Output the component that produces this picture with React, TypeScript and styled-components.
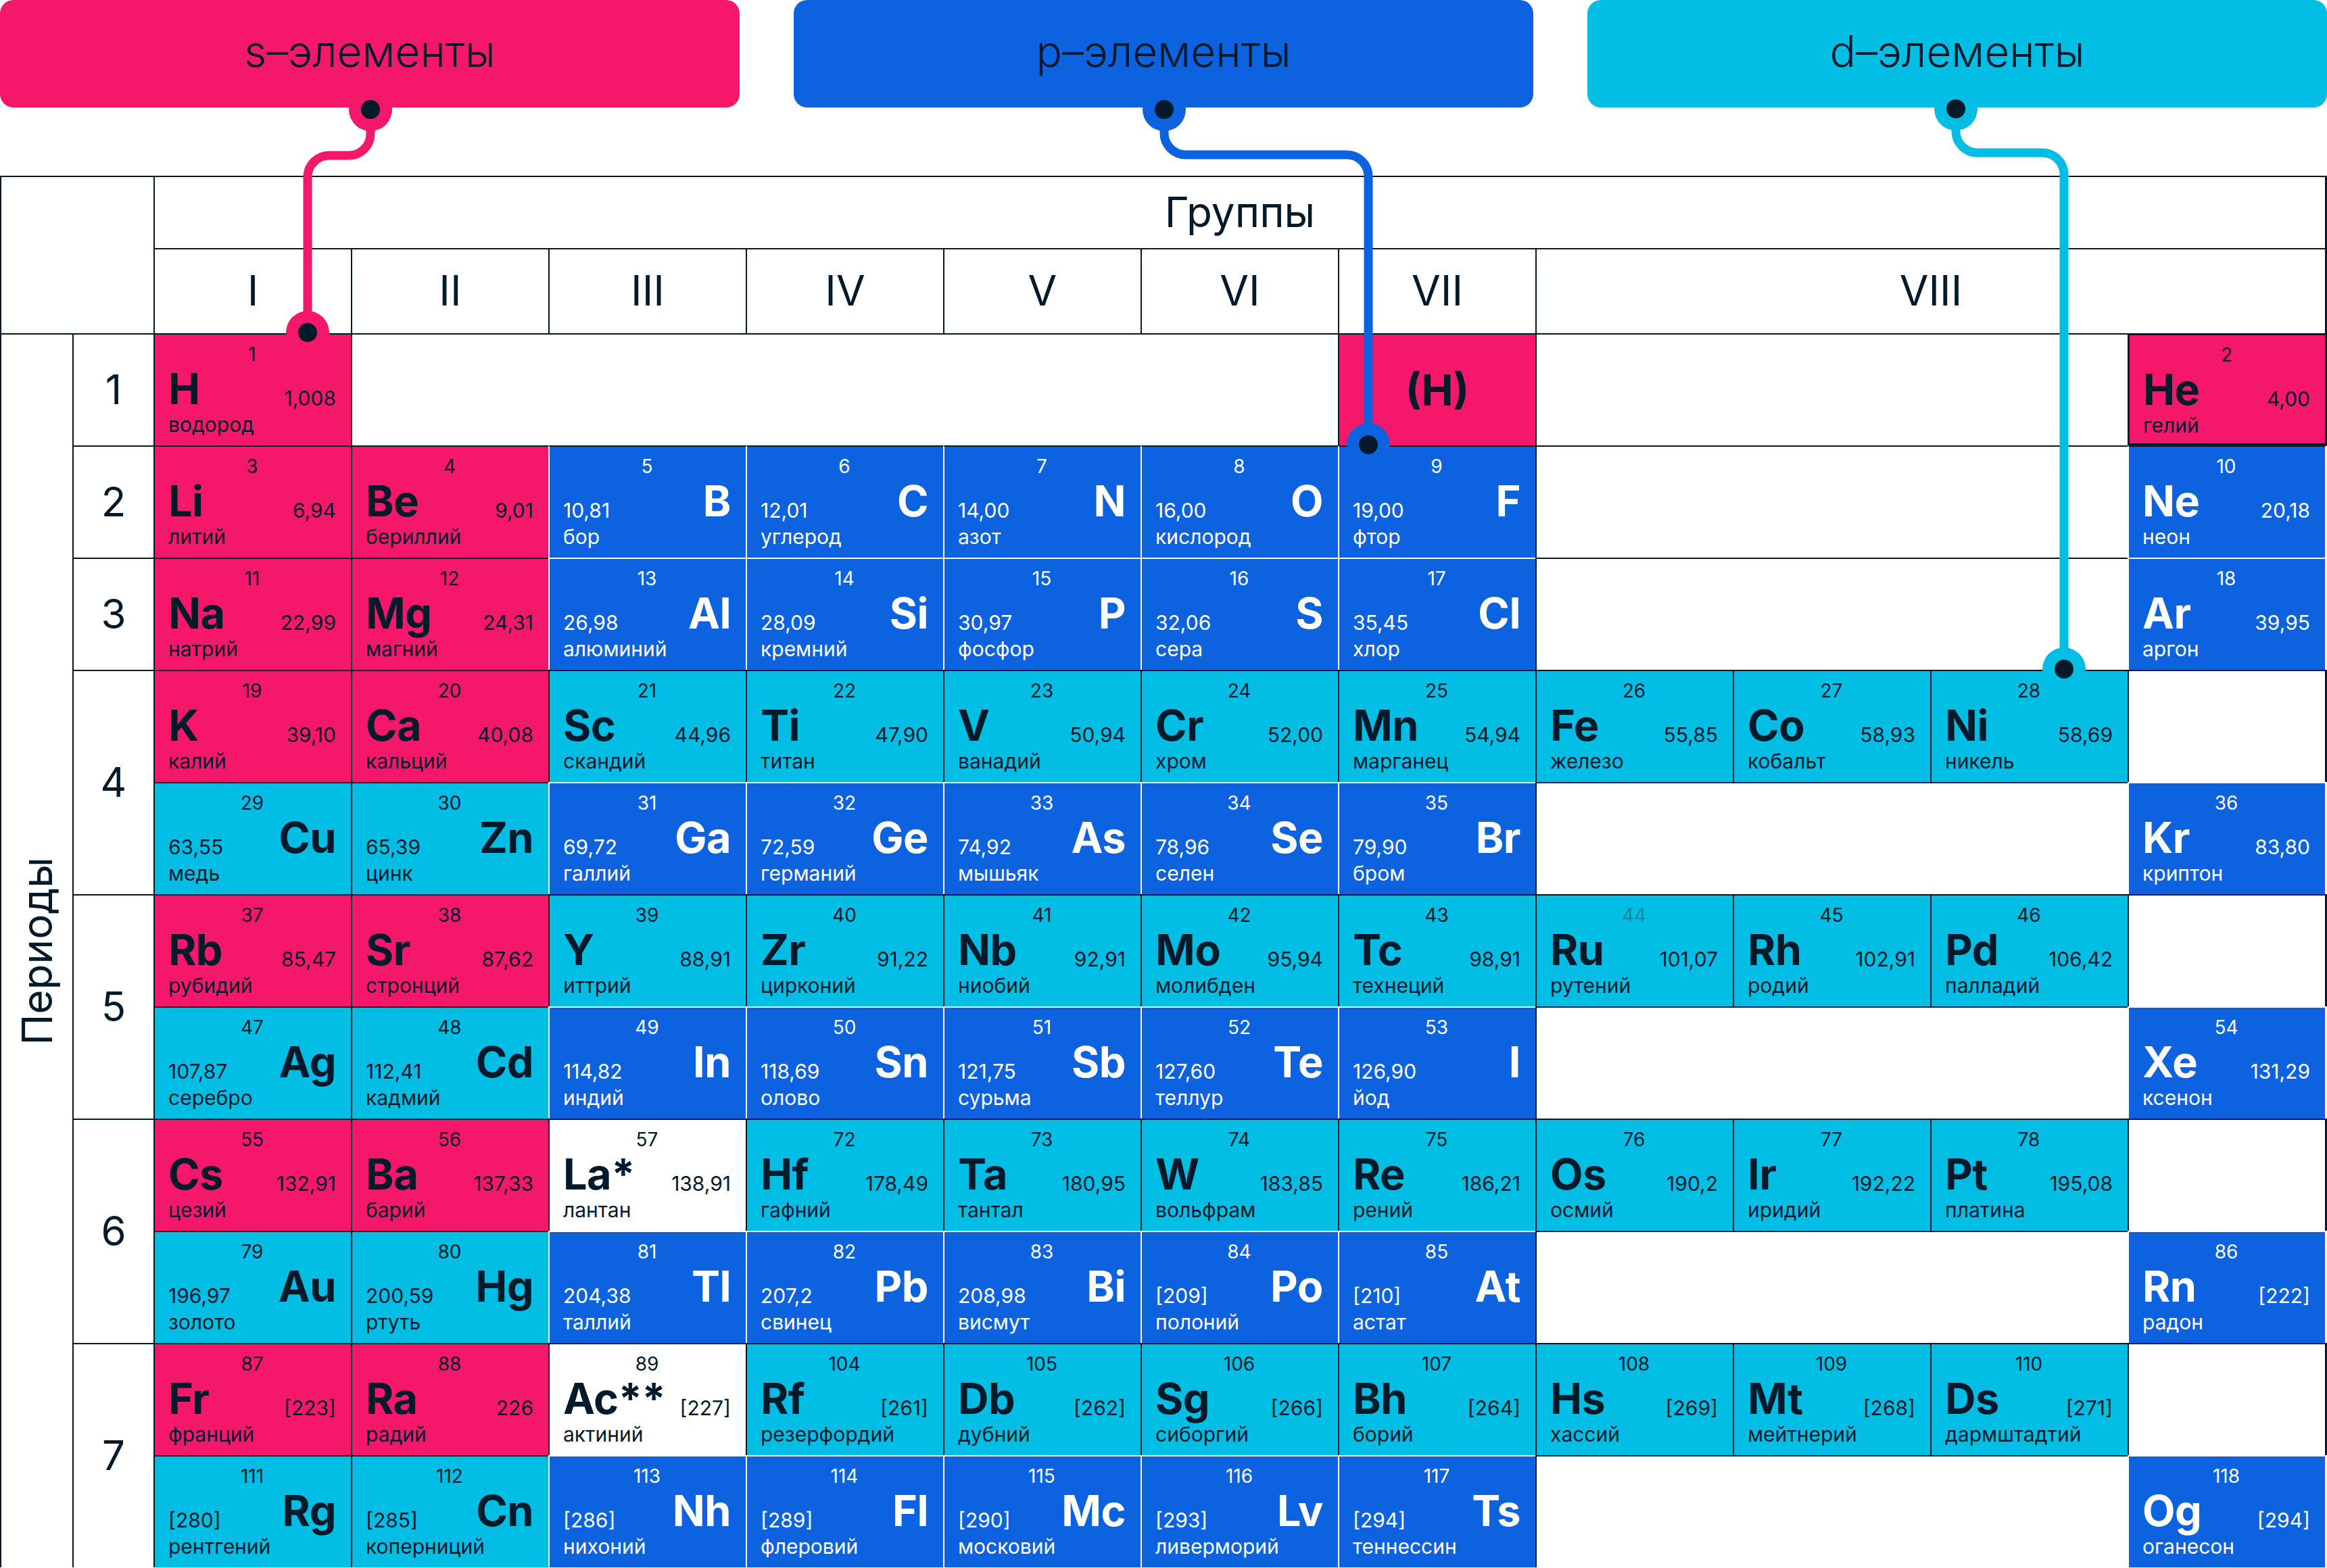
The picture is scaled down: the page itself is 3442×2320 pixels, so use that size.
import React from 'react';
import styled, { createGlobalStyle, css } from 'styled-components';

type Kind = 's' | 'p' | 'd' | 'f';

const palette = {
  ink: '#031a2b',
  s: '#f5186a',
  p: '#0d62df',
  d: '#03bee4',
  f: '#ffffff',
  white: '#ffffff',
};

const GlobalStyle = createGlobalStyle`
  * { box-sizing: border-box; }
  html, body { margin: 0; padding: 0; background: #ffffff; }
  body {
    font-family: Inter, "Noto Sans", "Liberation Sans", sans-serif;
    color: ${palette.ink};
  }
`;

const Page = styled.div`
  position: relative;
  width: 3442px;
  height: 2320px;
  overflow: hidden;
  background: #ffffff;
`;

const Legend = styled.div`
  display: grid;
  grid-template-columns: repeat(3, 1fr);
  column-gap: 80px;
  height: 159px;
  margin-bottom: 101px;
`;

const LegendBox = styled.div<{ $kind: Kind }>`
  display: flex;
  align-items: center;
  justify-content: center;
  padding-bottom: 8px;
  border-radius: 20px;
  background: ${(p) => palette[p.$kind]};
  font-size: 64px;
  font-weight: 300;
  color: ${palette.ink};
`;

const Table = styled.div`
  display: grid;
  grid-template-columns: 107px 120px repeat(10, 292px) 295px;
  grid-template-rows: 107px 126px repeat(11, 166px);
`;

const HeadCell = styled.div<{ $col: string; $row: string; $last?: boolean }>`
  grid-column: ${(p) => p.$col};
  grid-row: ${(p) => p.$row};
  display: flex;
  align-items: center;
  justify-content: center;
  padding-bottom: 3px;
  border-top: 2px solid ${palette.ink};
  border-left: 2px solid ${palette.ink};
  ${(p) => p.$last && css`border-right: 3px solid ${palette.ink};`}
  font-size: 62px;
  font-weight: 400;
`;

const PeriodsLabel = styled(HeadCell)`
  padding-bottom: 0;
  span {
    writing-mode: vertical-rl;
    transform: rotate(180deg);
  }
`;

const PeriodNumber = styled(HeadCell)`
  font-size: 60px;
`;

const Cell = styled.div<{
  $kind: Kind;
  $row: number;
  $topDark?: boolean;
  $last?: boolean;
  $outlined?: boolean;
}>`
  grid-row: ${(p) => p.$row};
  background: ${(p) => palette[p.$kind]};
  color: ${(p) => (p.$kind === 'p' ? palette.white : palette.ink)};
  border-top: 2px solid
    ${(p) => (p.$kind === 'p' && !p.$topDark ? palette.white : palette.ink)};
  border-left: 2px solid ${(p) => (p.$kind === 'p' ? palette.white : palette.ink)};
  ${(p) =>
    p.$last &&
    css`
      border-right: 3px solid ${p.$kind === 'p' ? palette.white : palette.ink};
    `}
  ${(p) =>
    p.$outlined &&
    css`
      border: 3px solid ${palette.ink};
    `}
  padding: 13px 22px 0 20px;
  display: grid;
  grid-template-rows: 32px 70px 36px;
  min-width: 0;
`;

const Number = styled.div<{ $muted?: boolean }>`
  text-align: center;
  font-size: 28px;
  line-height: 32px;
  ${(p) => p.$muted && css`color: #1b87a8;`}
`;

const MainRow = styled.div<{ $flip?: boolean }>`
  display: flex;
  flex-direction: ${(p) => (p.$flip ? 'row-reverse' : 'row')};
  justify-content: space-between;
  align-items: baseline;
`;

const Symbol = styled.span`
  font-size: 63px;
  font-weight: 700;
  line-height: 70px;
  letter-spacing: -0.5px;
`;

const Mass = styled.span`
  font-size: 30px;
  line-height: 70px;
  position: relative;
  top: 2px;
`;

const Name = styled.div`
  font-size: 30px;
  line-height: 36px;
  white-space: nowrap;
`;

const MirrorCell = styled(Cell)`
  display: flex;
  align-items: center;
  justify-content: center;
  padding: 0;
  font-size: 63px;
  font-weight: 700;
`;

const EmptyCell = styled.div<{ $row: number; $span: number; $last?: boolean }>`
  grid-row: ${(p) => p.$row};
  grid-column: span ${(p) => p.$span};
  border-top: 2px solid ${palette.ink};
  border-left: 2px solid ${palette.ink};
  ${(p) => p.$last && css`border-right: 3px solid ${palette.ink};`}
`;

const Overlay = styled.svg`
  position: absolute;
  left: 0;
  top: 0;
  pointer-events: none;
`;

type El = {
  n: number;
  sym: string;
  mass: string;
  name: string;
  kind: Kind;
  flip?: boolean;
  muted?: boolean;
  outlined?: boolean;
};
type Item = El | { empty: number } | { mirror: string };

const e = (
  n: number,
  sym: string,
  mass: string,
  name: string,
  kind: Kind,
  flip = false,
  extra: Partial<El> = {}
): El => ({ n, sym, mass, name, kind, flip, ...extra });

const rows: { period: number; items: Item[] }[] = [
  {
    period: 1,
    items: [
      e(1, 'H', '1,008', 'водород', 's'),
      { empty: 5 },
      { mirror: '(H)' },
      { empty: 3 },
      e(2, 'He', '4,00', 'гелий', 's', false, { outlined: true }),
    ],
  },
  {
    period: 2,
    items: [
      e(3, 'Li', '6,94', 'литий', 's'),
      e(4, 'Be', '9,01', 'бериллий', 's'),
      e(5, 'B', '10,81', 'бор', 'p', true),
      e(6, 'C', '12,01', 'углерод', 'p', true),
      e(7, 'N', '14,00', 'азот', 'p', true),
      e(8, 'O', '16,00', 'кислород', 'p', true),
      e(9, 'F', '19,00', 'фтор', 'p', true),
      { empty: 3 },
      e(10, 'Ne', '20,18', 'неон', 'p'),
    ],
  },
  {
    period: 3,
    items: [
      e(11, 'Na', '22,99', 'натрий', 's'),
      e(12, 'Mg', '24,31', 'магний', 's'),
      e(13, 'Al', '26,98', 'алюминий', 'p', true),
      e(14, 'Si', '28,09', 'кремний', 'p', true),
      e(15, 'P', '30,97', 'фосфор', 'p', true),
      e(16, 'S', '32,06', 'сера', 'p', true),
      e(17, 'Cl', '35,45', 'хлор', 'p', true),
      { empty: 3 },
      e(18, 'Ar', '39,95', 'аргон', 'p'),
    ],
  },
  {
    period: 4,
    items: [
      e(19, 'K', '39,10', 'калий', 's'),
      e(20, 'Ca', '40,08', 'кальций', 's'),
      e(21, 'Sc', '44,96', 'скандий', 'd'),
      e(22, 'Ti', '47,90', 'титан', 'd'),
      e(23, 'V', '50,94', 'ванадий', 'd'),
      e(24, 'Cr', '52,00', 'хром', 'd'),
      e(25, 'Mn', '54,94', 'марганец', 'd'),
      e(26, 'Fe', '55,85', 'железо', 'd'),
      e(27, 'Co', '58,93', 'кобальт', 'd'),
      e(28, 'Ni', '58,69', 'никель', 'd'),
      { empty: 1 },
    ],
  },
  {
    period: 4,
    items: [
      e(29, 'Cu', '63,55', 'медь', 'd', true),
      e(30, 'Zn', '65,39', 'цинк', 'd', true),
      e(31, 'Ga', '69,72', 'галлий', 'p', true),
      e(32, 'Ge', '72,59', 'германий', 'p', true),
      e(33, 'As', '74,92', 'мышьяк', 'p', true),
      e(34, 'Se', '78,96', 'селен', 'p', true),
      e(35, 'Br', '79,90', 'бром', 'p', true),
      { empty: 3 },
      e(36, 'Kr', '83,80', 'криптон', 'p'),
    ],
  },
  {
    period: 5,
    items: [
      e(37, 'Rb', '85,47', 'рубидий', 's'),
      e(38, 'Sr', '87,62', 'стронций', 's'),
      e(39, 'Y', '88,91', 'иттрий', 'd'),
      e(40, 'Zr', '91,22', 'цирконий', 'd'),
      e(41, 'Nb', '92,91', 'ниобий', 'd'),
      e(42, 'Mo', '95,94', 'молибден', 'd'),
      e(43, 'Tc', '98,91', 'технеций', 'd'),
      e(44, 'Ru', '101,07', 'рутений', 'd', false, { muted: true }),
      e(45, 'Rh', '102,91', 'родий', 'd'),
      e(46, 'Pd', '106,42', 'палладий', 'd'),
      { empty: 1 },
    ],
  },
  {
    period: 5,
    items: [
      e(47, 'Ag', '107,87', 'серебро', 'd', true),
      e(48, 'Cd', '112,41', 'кадмий', 'd', true),
      e(49, 'In', '114,82', 'индий', 'p', true),
      e(50, 'Sn', '118,69', 'олово', 'p', true),
      e(51, 'Sb', '121,75', 'сурьма', 'p', true),
      e(52, 'Te', '127,60', 'теллур', 'p', true),
      e(53, 'I', '126,90', 'йод', 'p', true),
      { empty: 3 },
      e(54, 'Xe', '131,29', 'ксенон', 'p'),
    ],
  },
  {
    period: 6,
    items: [
      e(55, 'Cs', '132,91', 'цезий', 's'),
      e(56, 'Ba', '137,33', 'барий', 's'),
      e(57, 'La*', '138,91', 'лантан', 'f'),
      e(72, 'Hf', '178,49', 'гафний', 'd'),
      e(73, 'Ta', '180,95', 'тантал', 'd'),
      e(74, 'W', '183,85', 'вольфрам', 'd'),
      e(75, 'Re', '186,21', 'рений', 'd'),
      e(76, 'Os', '190,2', 'осмий', 'd'),
      e(77, 'Ir', '192,22', 'иридий', 'd'),
      e(78, 'Pt', '195,08', 'платина', 'd'),
      { empty: 1 },
    ],
  },
  {
    period: 6,
    items: [
      e(79, 'Au', '196,97', 'золото', 'd', true),
      e(80, 'Hg', '200,59', 'ртуть', 'd', true),
      e(81, 'Tl', '204,38', 'таллий', 'p', true),
      e(82, 'Pb', '207,2', 'свинец', 'p', true),
      e(83, 'Bi', '208,98', 'висмут', 'p', true),
      e(84, 'Po', '[209]', 'полоний', 'p', true),
      e(85, 'At', '[210]', 'астат', 'p', true),
      { empty: 3 },
      e(86, 'Rn', '[222]', 'радон', 'p'),
    ],
  },
  {
    period: 7,
    items: [
      e(87, 'Fr', '[223]', 'франций', 's'),
      e(88, 'Ra', '226', 'радий', 's'),
      e(89, 'Ac**', '[227]', 'актиний', 'f'),
      e(104, 'Rf', '[261]', 'резерфордий', 'd'),
      e(105, 'Db', '[262]', 'дубний', 'd'),
      e(106, 'Sg', '[266]', 'сиборгий', 'd'),
      e(107, 'Bh', '[264]', 'борий', 'd'),
      e(108, 'Hs', '[269]', 'хассий', 'd'),
      e(109, 'Mt', '[268]', 'мейтнерий', 'd'),
      e(110, 'Ds', '[271]', 'дармштадтий', 'd'),
      { empty: 1 },
    ],
  },
  {
    period: 7,
    items: [
      e(111, 'Rg', '[280]', 'рентгений', 'd', true),
      e(112, 'Cn', '[285]', 'коперниций', 'd', true),
      e(113, 'Nh', '[286]', 'нихоний', 'p', true),
      e(114, 'Fl', '[289]', 'флеровий', 'p', true),
      e(115, 'Mc', '[290]', 'московий', 'p', true),
      e(116, 'Lv', '[293]', 'ливерморий', 'p', true),
      e(117, 'Ts', '[294]', 'теннессин', 'p', true),
      { empty: 3 },
      e(118, 'Og', '[294]', 'оганесон', 'p'),
    ],
  },
];

const groups = ['I', 'II', 'III', 'IV', 'V', 'VI', 'VII'];

// grid rows (1-based) taken by each period in the number column
const periodSpans = [
  { label: '1', row: '3' },
  { label: '2', row: '4' },
  { label: '3', row: '5' },
  { label: '4', row: '6 / 8' },
  { label: '5', row: '8 / 10' },
  { label: '6', row: '10 / 12' },
  { label: '7', row: '12 / 14' },
];

const connectors = [
  {
    color: palette.s,
    d: 'M548 162 V198 A32 32 0 0 1 516 230 H487 A32 32 0 0 0 455 262 V492',
    from: [548, 162],
    to: [455, 492],
  },
  {
    color: palette.p,
    d: 'M1722 162 V197 A32 32 0 0 0 1754 229 H1992 A32 32 0 0 1 2024 261 V658',
    from: [1722, 162],
    to: [2024, 658],
  },
  {
    color: palette.d,
    d: 'M2893 161 V194 A32 32 0 0 0 2925 226 H3021 A32 32 0 0 1 3053 258 V990',
    from: [2893, 161],
    to: [3053, 990],
  },
];

const ElementCell: React.FC<{ el: El; row: number; topDark: boolean; last: boolean }> = ({
  el,
  row,
  topDark,
  last,
}) => (
  <Cell $kind={el.kind} $row={row} $topDark={topDark} $last={last} $outlined={el.outlined}>
    <Number $muted={el.muted}>{el.n}</Number>
    <MainRow $flip={el.flip}>
      <Symbol>{el.sym}</Symbol>
      <Mass>{el.mass}</Mass>
    </MainRow>
    <Name>{el.name}</Name>
  </Cell>
);

export default function App() {
  return (
    <Page>
      <GlobalStyle />
      <Legend>
        <LegendBox $kind="s">s–элементы</LegendBox>
        <LegendBox $kind="p">p–элементы</LegendBox>
        <LegendBox $kind="d">d–элементы</LegendBox>
      </Legend>

      <Table>
        <HeadCell $col="1 / 3" $row="1 / 3" />
        <HeadCell $col="3 / 14" $row="1" $last>
          Группы
        </HeadCell>
        {groups.map((g, i) => (
          <HeadCell key={g} $col={`${i + 3}`} $row="2">
            {g}
          </HeadCell>
        ))}
        <HeadCell $col="10 / 14" $row="2" $last>
          VIII
        </HeadCell>

        <PeriodsLabel $col="1" $row="3 / 14">
          <span>Периоды</span>
        </PeriodsLabel>
        {periodSpans.map((p) => (
          <PeriodNumber key={p.label} $col="2" $row={p.row}>
            {p.label}
          </PeriodNumber>
        ))}

        {rows.map((r, ri) =>
          r.items.map((item, ii) => {
            const row = ri + 3;
            const last = ii === r.items.length - 1;
            if ('empty' in item) {
              return <EmptyCell key={`${ri}-${ii}`} $row={row} $span={item.empty} $last={last} />;
            }
            if ('mirror' in item) {
              return (
                <MirrorCell key={`${ri}-${ii}`} $kind="s" $row={row}>
                  {item.mirror}
                </MirrorCell>
              );
            }
            return (
              <ElementCell
                key={item.n}
                el={item}
                row={row}
                topDark={r.period === 2}
                last={last}
              />
            );
          })
        )}
      </Table>

      <Overlay width="3442" height="2320" viewBox="0 0 3442 2320">
        {connectors.map((c) => (
          <g key={c.d}>
            <path d={c.d} fill="none" stroke={c.color} strokeWidth={13} />
            <circle cx={c.from[0]} cy={c.from[1]} r={32} fill={c.color} />
            <circle cx={c.from[0]} cy={c.from[1]} r={14} fill={palette.ink} />
            <circle cx={c.to[0]} cy={c.to[1]} r={32} fill={c.color} />
            <circle cx={c.to[0]} cy={c.to[1]} r={14} fill={palette.ink} />
          </g>
        ))}
      </Overlay>
    </Page>
  );
}
